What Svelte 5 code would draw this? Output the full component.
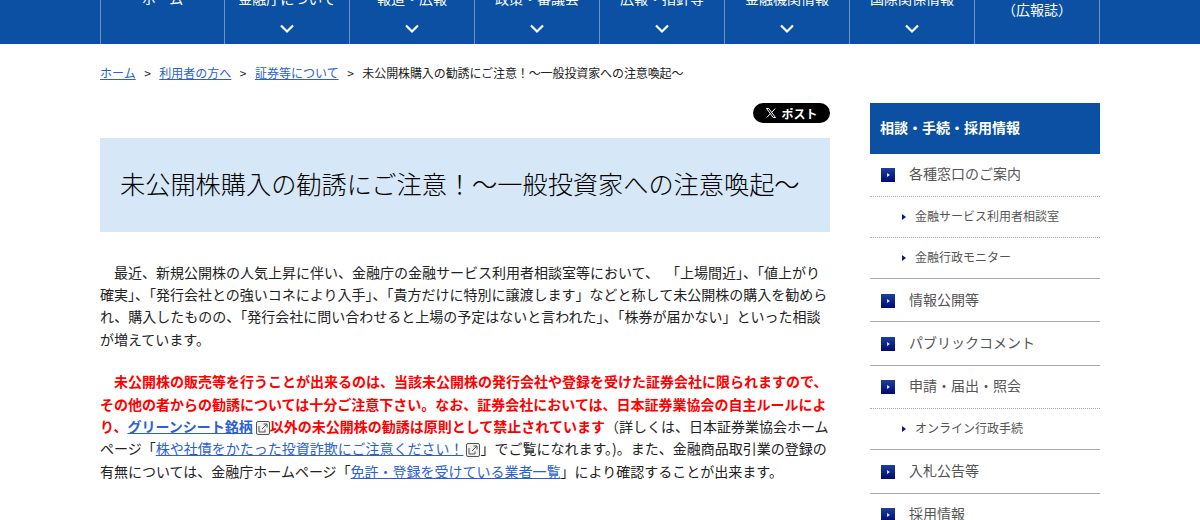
<script>
	const nav = [
		{ label: 'ホーム', arrow: false },
		{ label: '金融庁について', arrow: true },
		{ label: '報道・広報', arrow: true },
		{ label: '政策・審議会', arrow: true },
		{ label: '広報・指針等', arrow: true },
		{ label: '金融機関情報', arrow: true },
		{ label: '国際関係情報', arrow: true },
		{ label: 'アクセスFSA', sub: '（広報誌）', arrow: false }
	];

	const side = [
		{ label: '各種窓口のご案内', kids: ['金融サービス利用者相談室', '金融行政モニター'] },
		{ label: '情報公開等' },
		{ label: 'パブリックコメント' },
		{ label: '申請・届出・照会', kids: ['オンライン行政手続'] },
		{ label: '入札公告等' },
		{ label: '採用情報' }
	];
</script>

<header class="nav">
	<ul class="nav__list">
		{#each nav as item}
			<li class="nav__item" class:nav__item--two={item.sub}>
				<span class="nav__label">{item.label}</span>
				{#if item.sub}<span class="nav__sub">{item.sub}</span>{/if}
				{#if item.arrow}
					<svg class="nav__arrow" width="14" height="10" viewBox="0 0 14 10">
						<path d="M1 1.5 L7 7.5 L13 1.5" fill="none" stroke="#fff" stroke-width="2.2" />
					</svg>
				{/if}
			</li>
		{/each}
	</ul>
</header>

<div class="wrap">
	<nav class="crumbs">
		<a href="#top">ホーム</a><span class="crumbs__sep">&gt;</span><a href="#top">利用者の方へ</a><span class="crumbs__sep">&gt;</span><a href="#top">証券等について</a><span class="crumbs__sep">&gt;</span><span class="crumbs__here">未公開株購入の勧誘にご注意！～一般投資家への注意喚起～</span>
	</nav>

	<div class="columns">
		<main class="main">
			<div class="share">
				<span class="post">
					<svg width="12" height="12" viewBox="0 0 24 24">
						<path fill="none" stroke="#fff" stroke-width="2" d="M3 3 L16.5 21 H21 L7.5 3 Z M20.5 3 L13.4 11 M10.6 13.6 L3.5 21" />
					</svg>
					ポスト
				</span>
			</div>
			<h1 class="title">未公開株購入の勧誘にご注意！～一般投資家への注意喚起～</h1>

			<p class="para">最近、新規公開株の人気上昇に伴い、金融庁の金融サービス利用者相談室等において、&ensp;「上場間近」、「値上がり<span class="nobr">確実</span>」、「発行会社との強いコネにより入手」、「貴方だけに特別に譲渡します」などと称して未公開株の購入を勧められ、購入したものの、「発行会社に問い合わせると上場の予定はないと言われた」、「株券が届かない」といった相談が増えています。</p>

			<p class="para">
				<strong class="warn">未公開株の販売等を行うことが出来るのは、当該未公開株の発行会社や登録を受けた証券会社に限られますので、その他の者からの勧誘については十分ご注意下さい。なお、証券会社においては、日本証券業協会の自主ルールにより、<a href="#top">グリーンシート銘柄</a><svg class="ext" width="14" height="14" viewBox="0 0 14 14">
					<rect x="0.5" y="0.5" width="13" height="13" rx="1.5" fill="#f0f0f0" stroke="#555" />
					<path d="M3 5 V11 H9 V8.5 M6 8 L11 3 M7.5 3 H11 V6.5" fill="none" stroke="#555" />
				</svg>以外の未公開株の勧誘は原則として禁止されています</strong>（詳しくは、日本証券業協会ホームページ「<a href="#top">株や社債をかたった投資詐欺にご注意ください！</a><svg class="ext" width="14" height="14" viewBox="0 0 14 14">
					<rect x="0.5" y="0.5" width="13" height="13" rx="1.5" fill="#f0f0f0" stroke="#555" />
					<path d="M3 5 V11 H9 V8.5 M6 8 L11 3 M7.5 3 H11 V6.5" fill="none" stroke="#555" />
				</svg>」でご覧になれます。)。また、金融商品取引業の登録の有無については、金融庁ホームページ「<a href="#top">免許・登録を受けている業者一覧</a>」により確認することが出来ます。
			</p>
		</main>

		<aside class="side">
			<h2 class="side__head">相談・手続・採用情報</h2>
			{#each side as group}
				<div class="side__group">
					<div class="side__row">
						<span class="side__mark"></span>
						{group.label}
					</div>
					{#each group.kids ?? [] as kid}
						<div class="side__kid">{kid}</div>
					{/each}
				</div>
			{/each}
		</aside>
	</div>
</div>

<style>
	:global(body) {
		font-family: "Noto Sans CJK JP", "Liberation Sans", sans-serif;
		color: #222;
		background: #fff;
		height: 520px;
		overflow: hidden;
	}
	.nav {
		height: 44px;
		background: #0b50a3;
		overflow: hidden;
		display: flex;
		justify-content: center;
		align-items: flex-end;
	}
	.nav__list {
		display: flex;
		list-style: none;
		margin: 0;
		padding: 0;
		width: 1000px;
		height: 64px;
		flex: none;
		border-right: 1px solid #6d93c4;
		box-sizing: border-box;
	}
	.nav__item {
		flex: 0 0 125px;
		height: 64px;
		border-left: 1px solid #6d93c4;
		box-sizing: border-box;
		display: flex;
		flex-direction: column;
		align-items: center;
		color: #fff;
		font-size: 14px;
		line-height: 22px;
		padding-top: 7px;
	}
	.nav__item:first-child {
		flex-basis: 124px;
	}
	.nav__item--two {
		padding-top: 0;
	}
	.nav__item--two .nav__label {
		margin-top: -4px;
	}
	.nav__arrow {
		margin-top: 15px;
	}
	.nav__label {
		white-space: nowrap;
	}
	.wrap {
		width: 1000px;
		margin: 0 auto;
	}
	.crumbs {
		font-size: 12px;
		line-height: 18px;
		margin-top: 20px;
		height: 39px;
		color: #222;
		white-space: nowrap;
	}
	.crumbs a,
	.para a {
		color: #2b5fd4;
	}
	.crumbs__sep {
		margin: 0 8.5px;
	}
	.crumbs__here {
		letter-spacing: -0.1px;
	}
	.columns {
		display: flex;
		justify-content: space-between;
		align-items: flex-start;
	}
	.main {
		width: 730px;
	}
	.share {
		display: flex;
		justify-content: flex-end;
		height: 35px;
	}
	.post {
		display: flex;
		align-items: center;
		justify-content: center;
		gap: 4px;
		width: 77px;
		height: 20px;
		border-radius: 10px;
		background: #000;
		color: #fff;
		font-size: 12px;
		font-weight: 700;
	}
	.title {
		margin: 0;
		background: #d6e7f7;
		height: 94px;
		padding: 0 20px 5px;
		box-sizing: border-box;
		display: flex;
		align-items: center;
		font-size: 25.2px;
		font-weight: 300;
		color: #000;
		white-space: nowrap;
	}
	.para {
		margin: 28.5px 0 0;
		font-size: 14px;
		line-height: 22.4px;
		text-indent: 14px;
		color: #222;
	}
	.para + .para {
		margin-top: 20px;
	}
	.nobr {
		white-space: nowrap;
	}
	.warn {
		color: #f00;
		font-weight: 700;
	}
	.ext {
		vertical-align: -3px;
		margin-left: 3px;
	}
	.side {
		width: 230px;
	}
	.side__head {
		margin: 0;
		background: #0b50a3;
		color: #fff;
		font-size: 14px;
		font-weight: 700;
		height: 50.6px;
		line-height: 48px;
		padding-left: 10px;
		box-sizing: border-box;
	}
	.side__group {
		border-bottom: 1px solid #aaa;
	}
	.side__group:last-child {
		border-bottom: 0;
	}
	.side__row {
		display: flex;
		align-items: center;
		gap: 14px;
		height: 42.4px;
		box-sizing: border-box;
		padding: 0 0 3px 11px;
		font-size: 14px;
		color: #555;
	}
	.side__mark {
		width: 14px;
		height: 14px;
		margin-top: 4px;
		background: linear-gradient(#1c3fa0, #000a6e);
		position: relative;
		flex: none;
	}
	.side__mark::after {
		content: '';
		position: absolute;
		left: 6px;
		top: 5px;
		border-left: 3px solid #dfe6ff;
		border-top: 2px solid transparent;
		border-bottom: 2px solid transparent;
	}
	.side__kid {
		border-top: 1px dotted #aaa;
		height: 41px;
		box-sizing: border-box;
		line-height: 38px;
		padding-left: 45px;
		font-size: 12px;
		color: #555;
		position: relative;
	}
	.side__kid::before {
		content: '';
		position: absolute;
		left: 32px;
		top: 17px;
		border-left: 4px solid #0a1a7a;
		border-top: 3px solid transparent;
		border-bottom: 3px solid transparent;
	}
</style>
